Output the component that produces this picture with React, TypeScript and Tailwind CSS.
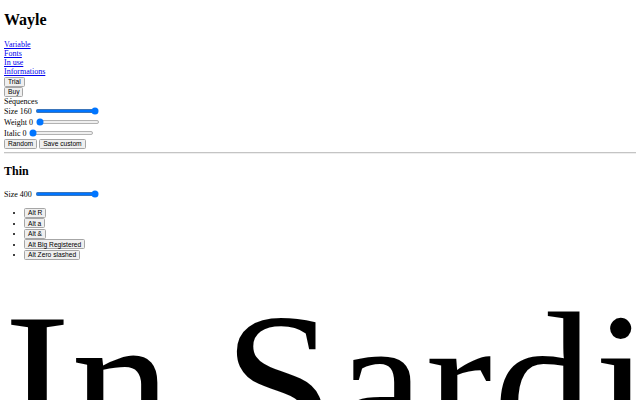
import { useState } from "react";

const btn =
  "inline-block rounded-[3px] border border-[#a6a6a6] bg-[#efefef] px-[6px] py-[1px] text-[13.333px] leading-[normal] text-black font-['Liberation_Sans',Arial,sans-serif]";

function Range({ max, value }: { max: number; value: number }) {
  const [v, setV] = useState(value);
  return (
    <input
      type="range"
      min={0}
      max={max}
      value={v}
      onChange={(e) => setV(Number(e.target.value))}
      className="mx-[2px] my-[3px] inline-block w-[129px] h-[16px] align-[-3px] accent-[#0075ff]"
    />
  );
}

export default function App() {
  return (
    <div className="h-[400px] w-[640px] overflow-hidden bg-white">
      <div className="flow-root px-[8px] text-[16px] leading-[normal] text-black [zoom:0.5] font-['Liberation_Serif','Times_New_Roman',serif]">
        <h1 className="mt-[22px] mb-[21.44px] text-[32px] font-bold leading-[normal]">Wayle</h1>

        <nav className="mb-[2px]">
          {["Variable", "Fonts", "In use", "Informations"].map((l) => (
            <a key={l} href="#" className="block w-fit text-[#0000ee] underline">
              {l}
            </a>
          ))}
        </nav>

        <div>
          <button type="button" className={btn}>Trial</button>
        </div>
        <div>
          <button type="button" className={btn}>Buy</button>
        </div>

        <div>Séquences</div>
        <div>
          Size 160 <Range max={160} value={160} />
        </div>
        <div>
          Weight 0 <Range max={900} value={0} />
        </div>
        <div>
          Italic 0 <Range max={1} value={0} />
        </div>
        <div className="flex gap-[4px]">
          <button type="button" className={btn}>Random</button>
          <button type="button" className={btn}>Save custom</button>
        </div>

        <hr className="mt-[6px] mb-[8px] h-0 border-t border-b border-t-[#c4c4c4] border-b-[#eeeeee]" />

        <h2 className="my-[19.92px] text-[24px] font-bold leading-[normal]">Thin</h2>
        <div>
          Size 400 <Range max={400} value={400} />
        </div>

        <ul className="my-[16px] list-disc pl-[40px]">
          {["Alt R", "Alt a", "Alt &", "Alt Big Registered", "Alt Zero slashed"].map((a) => (
            <li key={a} className="py-[0.5px]">
              <button type="button" className={btn}>{a}</button>
            </li>
          ))}
        </ul>

        <div className="whitespace-nowrap text-[400px] leading-[normal] tracking-[2px]">In Sardinia</div>
      </div>
    </div>
  );
}
